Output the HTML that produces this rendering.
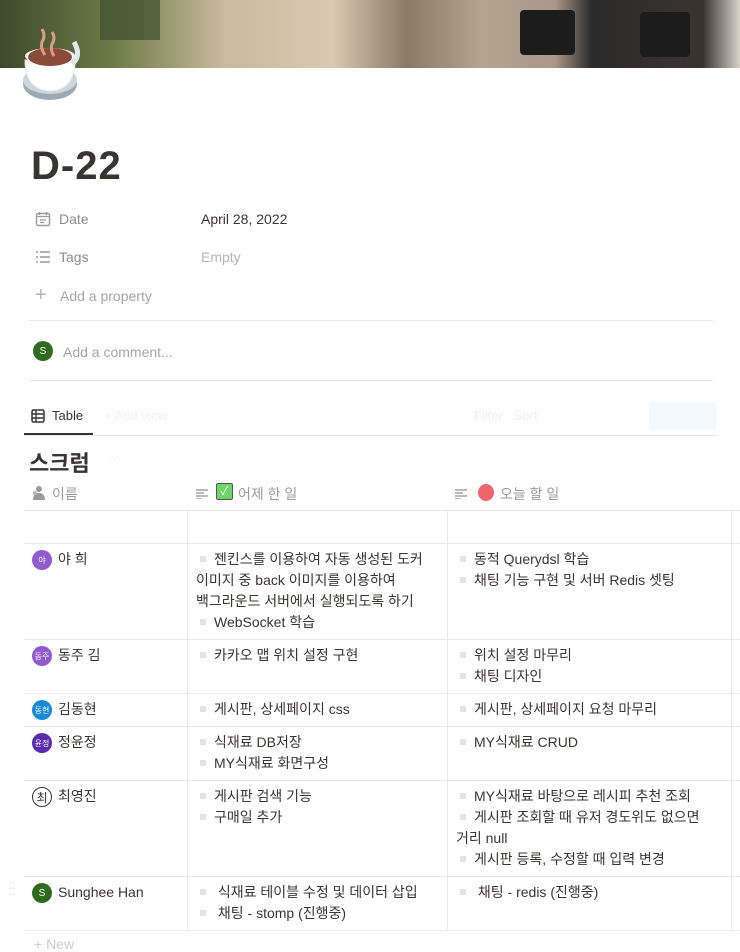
<!DOCTYPE html>
<html><head><meta charset="utf-8"><style>
*{margin:0;padding:0;box-sizing:border-box}
body{width:740px;height:945px;overflow:hidden;background:#fff;font-family:"Liberation Sans","Noto Sans CJK KR",sans-serif;color:#37352f;position:relative;font-size:14px;word-break:keep-all}
.a{position:absolute}
.cover{left:0;top:0;width:740px;height:68px;background:linear-gradient(90deg,#3d4a2c 0%,#6b7a45 15%,#c9b89c 30%,#d8c9b2 45%,#8a7a66 55%,#b3a48f 65%,#a89988 75%,#2a2a2a 80%,#3a3531 95%,#d8d2c6 100%)}
.g{color:#9b9a97}
.lbl{font-size:14px;color:#8d8b87}
.hl{height:1px;background:#e9e9e7}
.vl{width:1px;background:#e9e9e7}
.av{width:20px;height:20px;border-radius:50%;color:#fff;font-size:8px;display:flex;align-items:center;justify-content:center}
.cell{font-size:14px;line-height:21px;color:#37352f}
.b{display:inline-block;width:6px;height:6px;background:#e3e3e1;margin:0 8px 2px 4px;vertical-align:middle}
</style></head><body>
<div class="a cover"></div>
<div class="a" style="left:100px;top:0;width:60px;height:40px;background:#3b4f2a;opacity:.7"></div>
<div class="a" style="left:520px;top:10px;width:55px;height:45px;background:#1c1c1c;border-radius:4px"></div>
<div class="a" style="left:640px;top:12px;width:50px;height:45px;background:#1c1c1c;border-radius:4px"></div>
<svg class="a" style="left:20px;top:24px" width="60" height="82" viewBox="0 0 60 82">
<ellipse cx="30" cy="60" rx="27" ry="16" fill="#99aab5"/>
<ellipse cx="30" cy="56" rx="27" ry="14" fill="#ccd6dd"/>
<path d="M5 36 Q5 66 30 67 Q55 66 55 36 Z" fill="#fff" stroke="#e1e8ed"/>
<path d="M52 40 Q62 32 54 18" fill="none" stroke="#e1e8ed" stroke-width="5"/>
<ellipse cx="30" cy="32" rx="25" ry="8" fill="#f5f8fa"/>
<ellipse cx="30" cy="33" rx="22" ry="9" fill="#8a4b38"/>
<path d="M22 5 Q26 12 22 18 Q20 24 25 31M32 8 Q36 14 32 20 Q30 26 34 32" fill="none" stroke="#d99e82" stroke-width="3"/>
</svg>
<div class="a" style="left:31px;top:144px;font-size:40px;font-weight:bold;letter-spacing:1px">D-22</div>
<svg class="a" style="left:35px;top:211px" width="16" height="16" viewBox="0 0 16 16"><rect x="1.5" y="2.5" width="13" height="12" rx="1.5" fill="none" stroke="#9b9a97" stroke-width="1.4"/><path d="M1.5 5.5h13M4.5 1v3M11.5 1v3M5 9h6M5 11.5h4" stroke="#9b9a97" stroke-width="1.3"/></svg>
<div class="a lbl" style="left:59px;top:211px">Date</div>
<div class="a" style="left:201px;top:211px">April 28, 2022</div>
<svg class="a" style="left:35px;top:250px" width="16" height="14" viewBox="0 0 16 14"><path d="M1 2h2M1 7h2M1 12h2M5 2h10M5 7h10M5 12h10" stroke="#9b9a97" stroke-width="1.6"/></svg>
<div class="a lbl" style="left:59px;top:249px">Tags</div>
<div class="a g" style="left:201px;top:249px;color:#b5b4b0">Empty</div>
<div class="a" style="left:35px;top:286px;color:#b5b4b0;font-size:20px;line-height:18px">+</div>
<div class="a lbl" style="left:60px;top:288px;color:#a5a4a0">Add a property</div>
<div class="a hl" style="left:29px;top:320px;width:684px"></div>
<div class="a av" style="left:33px;top:341px;background:#2f6b1f;font-size:10px">S</div>
<div class="a" style="left:63px;top:344px;color:#a5a4a0">Add a comment...</div>
<div class="a hl" style="left:29px;top:380px;width:684px"></div>
<svg class="a" style="left:31px;top:409px" width="14" height="14" viewBox="0 0 14 14"><rect x="1" y="1" width="12" height="12" rx="1.5" fill="none" stroke="#37352f" stroke-width="1.5"/><path d="M1 5h12M1 9h12M5 1v12" stroke="#37352f" stroke-width="1.4"/></svg>
<div class="a" style="left:52px;top:408px;font-size:13px;font-weight:500">Table</div>
<div class="a" style="left:104px;top:408px;font-size:13px;color:#f3f3f2">+ Add view</div>
<div class="a" style="left:474px;top:408px;font-size:13px;color:#f0f0ef">Filter&nbsp;&nbsp; Sort</div>
<div class="a" style="left:649px;top:402px;width:68px;height:28px;background:#f4f9fd;border-radius:3px"></div>
<div class="a" style="left:24px;top:433px;width:69px;height:2px;background:#37352f"></div>
<div class="a hl" style="left:24px;top:435px;width:693px"></div>
<div class="a" style="left:29px;top:446px;font-size:22px;font-weight:bold">스크럼</div>
<div class="a" style="left:108px;top:450px;color:#eee">···</div>
<svg class="a" style="left:31px;top:485px" width="14" height="15" viewBox="0 0 14 15"><circle cx="8" cy="4" r="3" fill="#9b9a97"/><path d="M2 15 Q2 8 8 8 Q14 8 14 15Z" fill="#9b9a97"/><circle cx="4" cy="8" r="2" fill="#b8b7b3"/></svg>
<div class="a g" style="left:52px;top:484px">이름</div>
<svg class="a" style="left:196px;top:489px" width="12" height="10"><path d="M0 1h12M0 4h8M0 7h12M0 10h6" stroke="#a5a4a0" stroke-width="1.5"/></svg>
<div class="a" style="left:216px;top:483px;width:17px;height:17px;background:#6dd46a;border:1px solid #555;border-radius:2px;color:#fff;font-size:12px;text-align:center;line-height:15px">✓</div>
<div class="a g" style="left:238px;top:484px">어제 한 일</div>
<svg class="a" style="left:455px;top:489px" width="12" height="10"><path d="M0 1h12M0 4h8M0 7h12M0 10h6" stroke="#a5a4a0" stroke-width="1.5"/></svg>
<div class="a" style="left:478px;top:484px;width:16px;height:17px;background:#f0646e;border-radius:50%"></div>
<div class="a g" style="left:500px;top:484px">오늘 할 일</div>
<div class="a hl" style="left:24px;top:510px;width:716px"></div>
<div class="a vl" style="left:187px;top:511px;height:419px"></div>
<div class="a vl" style="left:447px;top:511px;height:419px"></div>
<div class="a vl" style="left:731px;top:511px;height:419px"></div>
<div class="a hl" style="left:24px;top:543px;width:716px"></div>
<div class="a hl" style="left:24px;top:639px;width:716px"></div>
<div class="a hl" style="left:24px;top:693px;width:716px"></div>
<div class="a hl" style="left:24px;top:726px;width:716px"></div>
<div class="a hl" style="left:24px;top:780px;width:716px"></div>
<div class="a hl" style="left:24px;top:876px;width:716px"></div>
<div class="a hl" style="left:24px;top:930px;width:716px"></div>

<div class="a av" style="left:32px;top:550px;background:#8e5bd0">야</div>
<div class="a cell" style="left:58px;top:549px">야 희</div>
<div class="a cell" style="left:196px;top:549px;width:248px"><span class="b"></span>젠킨스를 이용하여 자동 생성된 도커 이미지 중 back 이미지를 이용하여 백그라운드 서버에서 실행되도록 하기<br><span class="b"></span>WebSocket 학습</div>
<div class="a cell" style="left:456px;top:549px;width:275px"><span class="b"></span>동적 Querydsl 학습<br><span class="b"></span>채팅 기능 구현 및 서버 Redis 셋팅</div>

<div class="a av" style="left:32px;top:646px;background:#8e5bd0">동주</div>
<div class="a cell" style="left:58px;top:645px">동주 김</div>
<div class="a cell" style="left:196px;top:645px"><span class="b"></span>카카오 맵 위치 설정 구현</div>
<div class="a cell" style="left:456px;top:645px"><span class="b"></span>위치 설정 마무리<br><span class="b"></span>채팅 디자인</div>

<div class="a av" style="left:32px;top:700px;background:#1a8ad8">동현</div>
<div class="a cell" style="left:58px;top:699px">김동현</div>
<div class="a cell" style="left:196px;top:699px"><span class="b"></span>게시판, 상세페이지 css</div>
<div class="a cell" style="left:456px;top:699px"><span class="b"></span>게시판, 상세페이지 요청 마무리</div>

<div class="a av" style="left:32px;top:733px;background:#5a2ab0">윤정</div>
<div class="a cell" style="left:58px;top:732px">정윤정</div>
<div class="a cell" style="left:196px;top:732px"><span class="b"></span>식재료 DB저장<br><span class="b"></span>MY식재료 화면구성</div>
<div class="a cell" style="left:456px;top:732px"><span class="b"></span>MY식재료 CRUD</div>

<div class="a av" style="left:32px;top:787px;background:#fff;border:1.3px solid #37352f;color:#37352f;font-size:12px">최</div>
<div class="a cell" style="left:58px;top:786px">최영진</div>
<div class="a cell" style="left:196px;top:786px"><span class="b"></span>게시판 검색 기능<br><span class="b"></span>구매일 추가</div>
<div class="a cell" style="left:456px;top:786px;width:272px"><span class="b"></span>MY식재료 바탕으로 레시피 추천 조회<br><span class="b"></span>게시판 조회할 때 유저 경도위도 없으면 거리 null<br><span class="b"></span>게시판 등록, 수정할 때 입력 변경</div>

<div class="a" style="left:9px;top:884px;color:#ddd;font-size:10px;line-height:6px">⁚⁚<br>⁚⁚</div>
<div class="a av" style="left:32px;top:883px;background:#2f6b1f;font-size:10px">S</div>
<div class="a cell" style="left:58px;top:882px">Sunghee Han</div>
<div class="a cell" style="left:196px;top:882px"><span class="b"></span> 식재료 테이블 수정 및 데이터 삽입<br><span class="b"></span> 채팅 - stomp (진행중)</div>
<div class="a cell" style="left:456px;top:882px"><span class="b"></span> 채팅 - redis (진행중)</div>
<div class="a g" style="left:34px;top:936px;color:#ccc">+ New</div>
</body></html>
